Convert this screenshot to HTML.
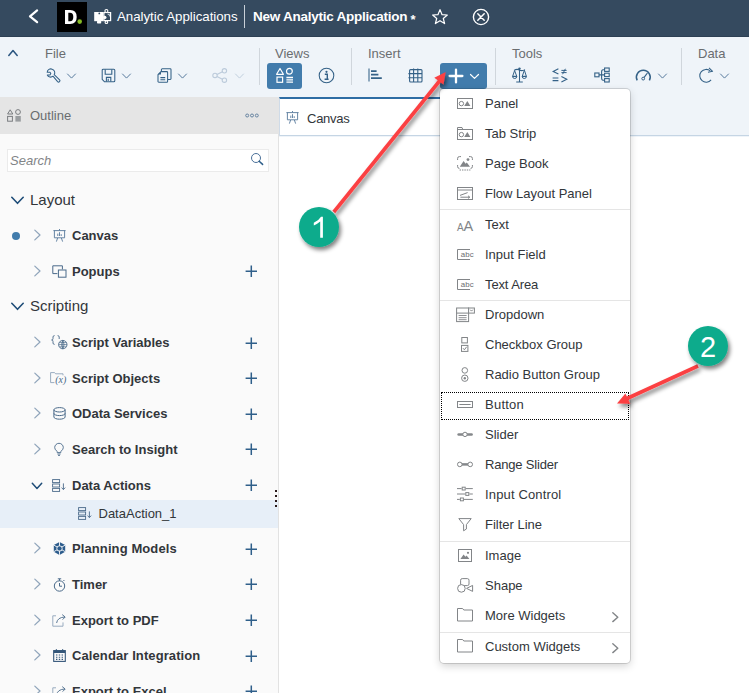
<!DOCTYPE html>
<html><head><meta charset="utf-8">
<style>
*{box-sizing:border-box;margin:0;padding:0}
html,body{width:749px;height:693px;overflow:hidden;background:#fff}
body{font-family:"Liberation Sans",sans-serif;position:relative;color:#32363a}
.abs{position:absolute}
#hdr{left:0;top:0;width:749px;height:37px;background:#354a5f;border-bottom:1px solid #2d4054}
#tb{left:0;top:37px;width:749px;height:100px;background:#eff4f9}
.tl{position:absolute;top:46px;font-size:13px;color:#6a6d70;line-height:15px}
.sep{position:absolute;top:48px;width:1px;height:37px;background:#d0d6dc}
.btn{position:absolute;top:63px;height:26px;background:#427cac;border-radius:3px}
svg{position:absolute;overflow:visible}
#left{left:0;top:97px;width:279px;height:596px;background:#fafafa;border-right:1px solid #e2e2e2}
#olh{left:0;top:97px;width:279px;height:37px;background:#e5e5e5}
#search{left:7px;top:149px;width:262px;height:23px;background:#fff;border:1px solid #ebebeb}
.grp{position:absolute;left:30px;font-size:15px;color:#32363a;line-height:18px}
.it{position:absolute;left:72px;margin-top:1px;font-size:13px;font-weight:bold;color:#32363a;line-height:16px;white-space:nowrap}
.plus{position:absolute;left:245px;width:12px;height:12px}
.plus:before{content:"";position:absolute;left:0;top:5.3px;width:12px;height:1.4px;background:#2f5f8a}
.plus:after{content:"";position:absolute;left:5.3px;top:0;width:1.4px;height:12px;background:#2f5f8a}
#tab{left:279px;top:97px;width:301px;height:39px;background:#fff;border-top:2px solid #2e6da4;border-left:1px solid #cfdbe8}
#tabline{left:280px;top:135px;width:469px;height:1px;background:#c5d5e4}
#menu{left:440px;top:89px;width:190px;height:573.5px;background:#fff;border-radius:4px;box-shadow:0 0 0 1px rgba(0,0,0,0.13),0 3px 9px rgba(0,0,0,0.18)}
.mi{position:absolute;left:485px;margin-top:1px;font-size:13px;color:#32363a;line-height:16px;white-space:nowrap}
.msep{position:absolute;left:440px;width:190px;height:1px;background:#e5e5e5}
.circ{position:absolute;width:41px;height:41px;border-radius:50%;background:#10a37f;border:2px solid #fff;box-shadow:0 2px 6px rgba(0,0,0,0.45);color:#fff;font-size:28px;text-align:center;line-height:38px}
</style></head><body>
<div class="abs" id="hdr"></div>
<!-- header content -->
<svg style="left:0px;top:0px" width="45" height="36" viewBox="0 0 45 36"><path d="M37.1 10.4 L30 16.3 L37.1 22.2" fill="none" stroke="#fff" stroke-width="2.2" stroke-linecap="round" stroke-linejoin="round"/></svg>
<div class="abs" style="left:57px;top:2px;width:30px;height:30px;background:#000"></div>
<svg style="left:57px;top:2px" width="30" height="30" viewBox="57 2 30 30"><path fill-rule="evenodd" d="M65 10 H70.2 Q76.7 10 76.7 17 Q76.7 24 70.2 24 H65 Z M68.3 12.8 V21.2 H70 Q73.3 21.2 73.3 17 Q73.3 12.8 70 12.8 Z" fill="#fff"/><circle cx="79.7" cy="21.6" r="2.3" fill="#86bc25"/></svg>
<svg style="left:94px;top:9px" width="18" height="15" viewBox="0 0 18 15"><rect x="0.2" y="3" width="9.4" height="9.2" fill="#fff"/><rect x="3" y="11.8" width="4.2" height="2.8" rx="0.8" fill="#fff"/><circle cx="5.3" cy="4.4" r="0.9" fill="#354a5f"/><rect x="10" y="3.6" width="6.6" height="8" fill="none" stroke="#fff" stroke-width="1.2"/><circle cx="12.4" cy="2" r="1.5" fill="#354a5f" stroke="#fff" stroke-width="1.1"/><circle cx="12.4" cy="13.2" r="1.3" fill="#354a5f" stroke="#fff" stroke-width="1.1"/><circle cx="10.8" cy="8.4" r="1.7" fill="#fff"/><path d="M13.6 5.4 L15.4 5.4 L15.4 7.4" fill="none" stroke="#dfe6ee" stroke-width="0.9"/><rect x="10.8" y="4.4" width="2.4" height="2" fill="#354a5f"/></svg>
<div class="abs" style="left:117px;top:9px;font-size:13.3px;color:#fff;line-height:16px;white-space:nowrap;letter-spacing:-0.03px">Analytic Applications</div>
<div class="abs" style="left:244px;top:5px;width:1px;height:23px;background:#c8d0d8"></div>
<div class="abs" style="left:253px;top:9px;font-size:13.5px;font-weight:bold;color:#fff;line-height:16px;white-space:nowrap;letter-spacing:-0.25px">New Analytic Application</div>
<div class="abs" style="left:410.5px;top:12px;font-size:13px;font-weight:bold;color:#fff;line-height:16px">*</div>
<svg style="left:431px;top:8px" width="18" height="17" viewBox="0 0 18 17"><g transform="translate(9,8.6) scale(0.94) translate(-9,-8.6)"><path d="M9 1.2 L11.2 6.6 L16.8 6.9 L12.5 10.6 L13.9 16 L9 13 L4.1 16 L5.5 10.6 L1.2 6.9 L6.8 6.6 Z" fill="none" stroke="#fff" stroke-width="1.3" stroke-linejoin="round"/></g></svg>
<svg style="left:472px;top:8px" width="18" height="18" viewBox="0 0 18 18"><circle cx="9" cy="9" r="7.6" fill="none" stroke="#fff" stroke-width="1.4"/><path d="M5.8 5.8 L12.2 12.2 M12.2 5.8 L5.8 12.2" stroke="#fff" stroke-width="1.5" stroke-linecap="round"/></svg>
<div class="abs" id="tb"></div>
<!-- toolbar content -->
<svg style="left:8px;top:49px" width="10" height="7" viewBox="0 0 10 7"><g transform="translate(0.0,0.5)"><path d="M0.8 6 L5 1 L9.2 6" fill="none" stroke="#2a5580" stroke-width="1.5" stroke-linecap="round" stroke-linejoin="round"/></g></svg>
<div class="tl" style="left:45px">File</div>
<div class="tl" style="left:275px">Views</div>
<div class="tl" style="left:368px">Insert</div>
<div class="tl" style="left:512px">Tools</div>
<div class="tl" style="left:698px">Data</div>
<div class="sep" style="left:259px"></div>
<div class="sep" style="left:351px"></div>
<div class="sep" style="left:495px"></div>
<div class="sep" style="left:681px"></div>
<div class="btn" style="left:267px;width:35px"></div>
<div class="btn" style="left:440px;width:47px"></div>
<svg style="left:46px;top:68px" width="15" height="15" viewBox="0 0 15 15"><path d="M6.2 1.2 A3.6 3.6 0 0 0 1.2 4.2 L4 4.2 L4.8 5.6 L4 7 L1.3 7 A3.6 3.6 0 0 0 7 8.2 L11.6 13.6 A1.3 1.3 0 0 0 13.6 11.8 L8.2 6.6 A3.6 3.6 0 0 0 6.2 1.2 Z" fill="none" stroke="#346187" stroke-width="1.05" stroke-linejoin="round"/></svg>
<svg style="left:67px;top:73px" width="9" height="5.6" viewBox="0 0 9 5.6"><g transform="translate(0.0,0.5)"><path d="M0.5 0.5 L4.5 4.6 L8.5 0.5" fill="none" stroke="#56799d" stroke-width="1" stroke-linecap="round" stroke-linejoin="round"/></g></svg>
<svg style="left:101px;top:68px" width="15" height="15" viewBox="0 0 15 15"><path d="M2.2 1.2 H12.8 A1 1 0 0 1 13.8 2.2 V12.8 A1 1 0 0 1 12.8 13.8 H3.6 L1.2 11.4 V2.2 A1 1 0 0 1 2.2 1.2 Z" fill="none" stroke="#346187" stroke-width="1.05" stroke-linejoin="round"/><path d="M4.2 1.4 V6.2 H10.8 V1.4" fill="none" stroke="#346187" stroke-width="1.1"/><path d="M5.4 13.6 V9.4 H9.8 V13.6 M7.2 10.8 V13" fill="none" stroke="#346187" stroke-width="1.1"/></svg>
<svg style="left:122px;top:73px" width="9" height="5.6" viewBox="0 0 9 5.6"><g transform="translate(0.0,0.5)"><path d="M0.5 0.5 L4.5 4.6 L8.5 0.5" fill="none" stroke="#56799d" stroke-width="1" stroke-linecap="round" stroke-linejoin="round"/></g></svg>
<svg style="left:157px;top:68px" width="15" height="15" viewBox="0 0 15 15"><path d="M4.4 3.2 V1.6 A0.8 0.8 0 0 1 5.2 0.8 H13.2 A0.8 0.8 0 0 1 14 1.6 V10.6 A0.8 0.8 0 0 1 13.2 11.4 H11" fill="none" stroke="#346187" stroke-width="1.05"/><path d="M4 3.6 H9.8 A0.8 0.8 0 0 1 10.6 4.4 V13.4 A0.8 0.8 0 0 1 9.8 14.2 H1.8 A0.8 0.8 0 0 1 1 13.4 V6.6 Z" fill="none" stroke="#346187" stroke-width="1.05" stroke-linejoin="round"/><path d="M1 6.6 H4 V3.6 Z" fill="#346187"/><path d="M3.4 9.6 H8.2 M3.4 11.8 H8.2" stroke="#346187" stroke-width="1.1"/></svg>
<svg style="left:178px;top:73px" width="9" height="5.6" viewBox="0 0 9 5.6"><g transform="translate(0.0,0.5)"><path d="M0.5 0.5 L4.5 4.6 L8.5 0.5" fill="none" stroke="#56799d" stroke-width="1" stroke-linecap="round" stroke-linejoin="round"/></g></svg>
<svg style="left:212px;top:68px" width="16" height="15" viewBox="0 0 16 15"><circle cx="3" cy="7.4" r="2.2" fill="none" stroke="#bccbdb" stroke-width="1.1"/><circle cx="12.4" cy="2.8" r="2.2" fill="none" stroke="#bccbdb" stroke-width="1.1"/><circle cx="12.4" cy="12.2" r="2.2" fill="none" stroke="#bccbdb" stroke-width="1.1"/><path d="M5 6.4 L10.4 3.8 M5 8.4 L10.4 11.2" stroke="#bccbdb" stroke-width="1.1"/></svg>
<svg style="left:235px;top:73px" width="9" height="5.6" viewBox="0 0 9 5.6"><g transform="translate(0.0,0.5)"><path d="M0.5 0.5 L4.5 4.6 L8.5 0.5" fill="none" stroke="#c0cfdd" stroke-width="1" stroke-linecap="round" stroke-linejoin="round"/></g></svg>
<svg style="left:276px;top:67px" width="18" height="16" viewBox="0 0 18 16"><g transform="translate(0.0,0.5)"><path d="M4 1 L7.4 6.8 H0.6 Z" fill="none" stroke="#fff" stroke-width="1.2" stroke-linejoin="round"/><circle cx="13.4" cy="3.8" r="2.9" fill="none" stroke="#fff" stroke-width="1.2"/><rect x="1" y="9.6" width="5.6" height="5.2" fill="none" stroke="#fff" stroke-width="1.2"/><path d="M10.4 10 H17 M10.4 12.4 H17 M10.4 14.6 H17" stroke="#fff" stroke-width="1.3"/></g></svg>
<svg style="left:318px;top:67px" width="17" height="17" viewBox="0 0 17 17"><circle cx="8.5" cy="8.5" r="7.3" fill="none" stroke="#346187" stroke-width="1.05"/><circle cx="8.5" cy="4.8" r="1.1" fill="#346187"/><path d="M6.8 7.2 H9.3 V12 M6.6 12.2 H10.6" fill="none" stroke="#346187" stroke-width="1.4"/></svg>
<svg style="left:368px;top:68px" width="15" height="14" viewBox="0 0 15 14"><path d="M1 0.6 V13.6" stroke="#346187" stroke-width="1.05"/><path d="M3 3.2 H8.6 M3 6.6 H10.4 M3 10.2 H13.8" stroke="#346187" stroke-width="1.7"/></svg>
<svg style="left:408px;top:68px" width="15" height="15" viewBox="0 0 15 15"><rect x="1.6" y="1.6" width="12.4" height="12.4" rx="1" fill="none" stroke="#346187" stroke-width="1.1"/><path d="M5.6 0.4 V14 M9.8 0.4 V14 M0.4 5.6 H14 M0.4 9.8 H14" stroke="#346187" stroke-width="1.1"/></svg>
<svg style="left:449px;top:69px" width="14" height="14" viewBox="0 0 14 14"><path d="M7 0.6 V13.4 M0.6 7 H13.4" stroke="#fff" stroke-width="2.3" stroke-linecap="round"/></svg>
<svg style="left:470px;top:74px" width="9" height="5.4" viewBox="0 0 9 5.4"><path d="M0.5 0.5 L4.5 4.4 L8.5 0.5" fill="none" stroke="#fff" stroke-width="1.2" stroke-linecap="round" stroke-linejoin="round"/></svg>
<svg style="left:512px;top:67px" width="15" height="16" viewBox="0 0 15 16"><path d="M7.5 1 V14.6 M4.2 15 H10.8 M2 3.4 Q5 1.6 7.5 3 Q10 4.4 13 2.6" fill="none" stroke="#346187" stroke-width="1.05"/><path d="M0.6 9.4 L2.6 3.6 L4.8 9.4 Z M0.6 9.4 A2.1 2.1 0 0 0 4.8 9.4 Z" fill="none" stroke="#346187" stroke-width="1"/><path d="M10.2 9.4 L12.4 3.2 L14.4 9.4 Z M10.2 9.4 A2.1 2.1 0 0 0 14.4 9.4 Z" fill="none" stroke="#346187" stroke-width="1"/><circle cx="7.5" cy="1.6" r="1.2" fill="#346187"/></svg>
<svg style="left:552px;top:68px" width="16" height="15" viewBox="0 0 16 15"><path d="M6.4 0.8 L1.2 3.4 L6.4 6" fill="none" stroke="#346187" stroke-width="1.1"/><path d="M9.4 2.4 H14.6 M9.4 4.6 H14.6 M13.4 0.8 L10.6 6.2" stroke="#346187" stroke-width="1"/><path d="M0.6 10 H6.4 M0.6 12.6 H6.4" stroke="#346187" stroke-width="1.1"/><path d="M9.4 8.4 L14.8 11.2 L9.4 14" fill="none" stroke="#346187" stroke-width="1.1"/></svg>
<svg style="left:594px;top:67px" width="16" height="16" viewBox="0 0 16 16"><rect x="0.8" y="6" width="4.2" height="3.8" fill="none" stroke="#346187" stroke-width="1.1"/><rect x="10.6" y="1" width="4.6" height="3.4" fill="none" stroke="#346187" stroke-width="1.1"/><rect x="10.6" y="6.2" width="4.6" height="3.4" fill="none" stroke="#346187" stroke-width="1.1"/><rect x="10.6" y="11.6" width="4.6" height="3.4" fill="none" stroke="#346187" stroke-width="1.1"/><path d="M5 7.9 H10.6 M10.6 2.7 H9 Q7.6 2.7 7.6 5 V10.8 Q7.6 13.3 9 13.3 H10.6" fill="none" stroke="#346187" stroke-width="1.1"/></svg>
<svg style="left:635px;top:69px" width="17" height="13" viewBox="0 0 17 13"><path d="M2.2 11.4 A6.9 6.9 0 1 1 14.4 11.4" fill="none" stroke="#346187" stroke-width="1.5"/><path d="M8.2 9.6 L12.4 4" stroke="#346187" stroke-width="1.2"/><circle cx="8.2" cy="9.6" r="1.4" fill="#eff4f9" stroke="#346187" stroke-width="1"/></svg>
<svg style="left:658px;top:73px" width="9" height="5.6" viewBox="0 0 9 5.6"><g transform="translate(0.0,0.5)"><path d="M0.5 0.5 L4.5 4.6 L8.5 0.5" fill="none" stroke="#56799d" stroke-width="1" stroke-linecap="round" stroke-linejoin="round"/></g></svg>
<svg style="left:699px;top:67px" width="16" height="17" viewBox="0 0 16 17"><path d="M12.1 12.9 A6.4 6.4 0 1 1 11.3 3.9" fill="none" stroke="#346187" stroke-width="1.05"/><path d="M10 0.9 L13.6 4.3 L9 5.3" fill="none" stroke="#346187" stroke-width="1.05" stroke-linejoin="round"/></svg>
<svg style="left:720px;top:73px" width="9" height="5.6" viewBox="0 0 9 5.6"><g transform="translate(0.0,0.5)"><path d="M0.5 0.5 L4.5 4.6 L8.5 0.5" fill="none" stroke="#56799d" stroke-width="1" stroke-linecap="round" stroke-linejoin="round"/></g></svg>
<div class="abs" id="left"></div>
<div class="abs" id="olh"></div>
<div class="abs" id="search"></div>
<!-- outline header -->
<svg style="left:7px;top:109px" width="15" height="13" viewBox="0 0 15 13"><path d="M3.2 0.8 L5.8 5 H0.6 Z" fill="none" stroke="#7a7d80" stroke-width="1"/><circle cx="11" cy="3" r="2.4" fill="none" stroke="#7a7d80" stroke-width="1"/><rect x="0.6" y="7.4" width="4.8" height="4.8" fill="none" stroke="#7a7d80" stroke-width="1"/><rect x="8.4" y="7" width="5.4" height="5.6" fill="#9a9da0"/></svg>
<div class="abs" style="left:30px;top:108px;font-size:13px;color:#6a6d70;line-height:16px">Outline</div>
<svg style="left:245px;top:113px" width="14" height="5" viewBox="0 0 14 5"><circle cx="2.2" cy="2.5" r="1.5" fill="none" stroke="#5b7a9a" stroke-width="0.9"/><circle cx="7" cy="2.5" r="1.5" fill="none" stroke="#5b7a9a" stroke-width="0.9"/><circle cx="11.8" cy="2.5" r="1.5" fill="none" stroke="#5b7a9a" stroke-width="0.9"/></svg>
<div class="abs" style="left:10px;top:153px;font-size:13px;font-style:italic;color:#828588;line-height:16px">Search</div>
<svg style="left:250px;top:152px" width="14" height="14" viewBox="0 0 14 14"><circle cx="6" cy="6" r="4.5" fill="none" stroke="#4a7099" stroke-width="1"/><path d="M9.2 9.2 L12.6 12.4" stroke="#2f5f8a" stroke-width="1.5" stroke-linecap="round"/></svg>
<!-- selected row -->
<div class="abs" style="left:0;top:500px;width:278px;height:27.5px;background:#e7eff8"></div>
<svg style="left:11px;top:196px" width="13" height="8" viewBox="0 0 13 8"><g transform="translate(0.0,0.5)"><path d="M0.8 0.8 L6.5 6.8 L12.2 0.8" fill="none" stroke="#1f4d78" stroke-width="1.6" stroke-linecap="round" stroke-linejoin="round"/></g></svg>
<div class="grp" style="top:190.5px">Layout</div>
<div class="abs" style="left:12px;top:232px;width:8px;height:8px;border-radius:50%;background:#427cac"></div>
<svg style="left:34px;top:229px" width="7" height="11" viewBox="0 0 7 11"><g transform="translate(0.0,0.5)"><path d="M0.8 0.6 L6 5.5 L0.8 10.4" fill="none" stroke="#8fa4ba" stroke-width="1.2" stroke-linecap="round" stroke-linejoin="round"/></g></svg>
<div class="it" style="top:227px">Canvas</div>
<svg style="left:34px;top:265px" width="7" height="11" viewBox="0 0 7 11"><g transform="translate(0.0,0.5)"><path d="M0.8 0.6 L6 5.5 L0.8 10.4" fill="none" stroke="#8fa4ba" stroke-width="1.2" stroke-linecap="round" stroke-linejoin="round"/></g></svg>
<div class="it" style="top:263px">Popups</div>
<svg style="left:245px;top:265px" width="13" height="13" viewBox="0 0 13 13"><path d="M6.3 0.6 V12 M0.6 6.3 H12" stroke="#2f5f8a" stroke-width="1.5" fill="none"/></svg>
<svg style="left:11px;top:302px" width="13" height="8" viewBox="0 0 13 8"><g transform="translate(0.0,0.5)"><path d="M0.8 0.8 L6.5 6.8 L12.2 0.8" fill="none" stroke="#1f4d78" stroke-width="1.6" stroke-linecap="round" stroke-linejoin="round"/></g></svg>
<div class="grp" style="top:296.5px">Scripting</div>
<svg style="left:34px;top:336px" width="7" height="11" viewBox="0 0 7 11"><g transform="translate(0.0,0.5)"><path d="M0.8 0.6 L6 5.5 L0.8 10.4" fill="none" stroke="#8fa4ba" stroke-width="1.2" stroke-linecap="round" stroke-linejoin="round"/></g></svg>
<div class="it" style="top:334px">Script Variables</div>
<svg style="left:245px;top:337px" width="13" height="13" viewBox="0 0 13 13"><path d="M6.3 0.6 V12 M0.6 6.3 H12" stroke="#2f5f8a" stroke-width="1.5" fill="none"/></svg>
<svg style="left:34px;top:372px" width="7" height="11" viewBox="0 0 7 11"><g transform="translate(0.0,0.5)"><path d="M0.8 0.6 L6 5.5 L0.8 10.4" fill="none" stroke="#8fa4ba" stroke-width="1.2" stroke-linecap="round" stroke-linejoin="round"/></g></svg>
<div class="it" style="top:370px">Script Objects</div>
<svg style="left:245px;top:372px" width="13" height="13" viewBox="0 0 13 13"><path d="M6.3 0.6 V12 M0.6 6.3 H12" stroke="#2f5f8a" stroke-width="1.5" fill="none"/></svg>
<svg style="left:34px;top:407px" width="7" height="11" viewBox="0 0 7 11"><g transform="translate(0.0,0.5)"><path d="M0.8 0.6 L6 5.5 L0.8 10.4" fill="none" stroke="#8fa4ba" stroke-width="1.2" stroke-linecap="round" stroke-linejoin="round"/></g></svg>
<div class="it" style="top:405px">OData Services</div>
<svg style="left:245px;top:408px" width="13" height="13" viewBox="0 0 13 13"><path d="M6.3 0.6 V12 M0.6 6.3 H12" stroke="#2f5f8a" stroke-width="1.5" fill="none"/></svg>
<svg style="left:34px;top:443px" width="7" height="11" viewBox="0 0 7 11"><g transform="translate(0.0,0.5)"><path d="M0.8 0.6 L6 5.5 L0.8 10.4" fill="none" stroke="#8fa4ba" stroke-width="1.2" stroke-linecap="round" stroke-linejoin="round"/></g></svg>
<div class="it" style="top:441px">Search to Insight</div>
<svg style="left:245px;top:443px" width="13" height="13" viewBox="0 0 13 13"><path d="M6.3 0.6 V12 M0.6 6.3 H12" stroke="#2f5f8a" stroke-width="1.5" fill="none"/></svg>
<svg style="left:31px;top:482px" width="11" height="7" viewBox="0 0 11 7"><g transform="translate(0.5,0.5)"><path d="M0.8 0.8 L5.5 5.9 L10.2 0.8" fill="none" stroke="#1f4d78" stroke-width="1.5" stroke-linecap="round" stroke-linejoin="round"/></g></svg>
<div class="it" style="top:477px">Data Actions</div>
<svg style="left:245px;top:479px" width="13" height="13" viewBox="0 0 13 13"><path d="M6.3 0.6 V12 M0.6 6.3 H12" stroke="#2f5f8a" stroke-width="1.5" fill="none"/></svg>
<div class="abs" style="left:98.5px;top:506px;font-size:13px;color:#32363a;line-height:16px">DataAction_1</div>
<svg style="left:34px;top:542px" width="7" height="11" viewBox="0 0 7 11"><g transform="translate(0.0,0.5)"><path d="M0.8 0.6 L6 5.5 L0.8 10.4" fill="none" stroke="#8fa4ba" stroke-width="1.2" stroke-linecap="round" stroke-linejoin="round"/></g></svg>
<div class="it" style="top:540px;letter-spacing:0.1px">Planning Models</div>
<svg style="left:245px;top:543px" width="13" height="13" viewBox="0 0 13 13"><path d="M6.3 0.6 V12 M0.6 6.3 H12" stroke="#2f5f8a" stroke-width="1.5" fill="none"/></svg>
<svg style="left:34px;top:578px" width="7" height="11" viewBox="0 0 7 11"><g transform="translate(0.0,0.5)"><path d="M0.8 0.6 L6 5.5 L0.8 10.4" fill="none" stroke="#8fa4ba" stroke-width="1.2" stroke-linecap="round" stroke-linejoin="round"/></g></svg>
<div class="it" style="top:576px">Timer</div>
<svg style="left:245px;top:578px" width="13" height="13" viewBox="0 0 13 13"><path d="M6.3 0.6 V12 M0.6 6.3 H12" stroke="#2f5f8a" stroke-width="1.5" fill="none"/></svg>
<svg style="left:34px;top:614px" width="7" height="11" viewBox="0 0 7 11"><g transform="translate(0.0,0.5)"><path d="M0.8 0.6 L6 5.5 L0.8 10.4" fill="none" stroke="#8fa4ba" stroke-width="1.2" stroke-linecap="round" stroke-linejoin="round"/></g></svg>
<div class="it" style="top:612px">Export to PDF</div>
<svg style="left:245px;top:614px" width="13" height="13" viewBox="0 0 13 13"><path d="M6.3 0.6 V12 M0.6 6.3 H12" stroke="#2f5f8a" stroke-width="1.5" fill="none"/></svg>
<svg style="left:34px;top:649px" width="7" height="11" viewBox="0 0 7 11"><g transform="translate(0.0,0.5)"><path d="M0.8 0.6 L6 5.5 L0.8 10.4" fill="none" stroke="#8fa4ba" stroke-width="1.2" stroke-linecap="round" stroke-linejoin="round"/></g></svg>
<div class="it" style="top:647px;letter-spacing:0.1px">Calendar Integration</div>
<svg style="left:245px;top:650px" width="13" height="13" viewBox="0 0 13 13"><path d="M6.3 0.6 V12 M0.6 6.3 H12" stroke="#2f5f8a" stroke-width="1.5" fill="none"/></svg>
<svg style="left:34px;top:685px" width="7" height="11" viewBox="0 0 7 11"><g transform="translate(0.0,0.5)"><path d="M0.8 0.6 L6 5.5 L0.8 10.4" fill="none" stroke="#8fa4ba" stroke-width="1.2" stroke-linecap="round" stroke-linejoin="round"/></g></svg>
<div class="it" style="top:683px">Export to Excel</div>
<svg style="left:245px;top:685px" width="13" height="13" viewBox="0 0 13 13"><path d="M6.3 0.6 V12 M0.6 6.3 H12" stroke="#2f5f8a" stroke-width="1.5" fill="none"/></svg>
<svg style="left:53px;top:229px" width="13" height="13" viewBox="0 0 13 13"><path d="M6.5 0 V1.4 M0.4 1.6 H12.6 M1.4 1.6 V8.8 H11.6 V1.6 M4.6 9 L3.4 12.6 M8.4 9 L9.6 12.6" fill="none" stroke="#56789b" stroke-width="0.9"/><path d="M4.8 4.6 V7 M6.5 3.2 V7 M8.2 5.2 V7" stroke="#56789b" stroke-width="0.9"/></svg>
<svg style="left:52px;top:265px" width="15" height="13" viewBox="0 0 15 13"><path d="M5.4 8.6 H0.8 V0.8 H10.4 V4.4" fill="none" stroke="#4a6a8a" stroke-width="1"/><rect x="6.4" y="5" width="7.6" height="7.2" fill="#fafafa" stroke="#4a6a8a" stroke-width="1"/></svg>
<svg style="left:51px;top:335px" width="17" height="15" viewBox="0 0 17 15"><path d="M3.6 0.6 Q2 0.6 2 2 V3.6 Q2 5 0.6 5 Q2 5 2 6.4 V8 Q2 9.4 3.6 9.4" fill="none" stroke="#4a6a8a" stroke-width="0.9"/><path d="M6.6 0.6 Q8.2 0.6 8.2 2 V4" fill="none" stroke="#4a6a8a" stroke-width="0.9"/><circle cx="11.8" cy="9.6" r="4.2" fill="none" stroke="#4a6a8a" stroke-width="0.9"/><path d="M7.6 9.6 H16 M11.8 5.4 V13.8 M8.4 7.4 H15.2 M8.4 11.8 H15.2 M11.8 5.4 Q9 9.6 11.8 13.8 M11.8 5.4 Q14.6 9.6 11.8 13.8" fill="none" stroke="#4a6a8a" stroke-width="0.7"/></svg>
<svg style="left:50px;top:372px" width="19" height="12" viewBox="0 0 19 12"><path d="M4.4 10.6 H0.6 V0.6 H4.6 L5.6 1.8 H13 V3.4" fill="none" stroke="#8fa4ba" stroke-width="0.9"/><text x="5.2" y="10.6" font-family="Liberation Serif" font-style="italic" font-size="10" fill="#4a6a8a">(x)</text></svg>
<svg style="left:53px;top:407px" width="13" height="13" viewBox="0 0 13 13"><ellipse cx="6.5" cy="2.8" rx="5.6" ry="2.2" fill="none" stroke="#4a6a8a" stroke-width="1"/><path d="M0.9 2.8 V10 A5.6 2.2 0 0 0 12.1 10 V2.8 M0.9 6.4 A5.6 2.2 0 0 0 12.1 6.4" fill="none" stroke="#4a6a8a" stroke-width="1"/></svg>
<svg style="left:54px;top:443px" width="10" height="13" viewBox="0 0 10 13"><path d="M3.2 9.6 V8.4 Q0.7 6.8 0.7 4.6 A4.3 4.3 0 0 1 9.3 4.6 Q9.3 6.8 6.8 8.4 V9.6 Z" fill="none" stroke="#4a6a8a" stroke-width="0.9"/><path d="M3.4 11 H6.6 M4 12.4 H6" stroke="#4a6a8a" stroke-width="0.9"/></svg>
<svg style="left:52px;top:479px" width="14" height="13" viewBox="0 0 14 13"><rect x="0.6" y="0.6" width="7" height="3" fill="none" stroke="#4a6a8a" stroke-width="0.9"/><rect x="0.6" y="5" width="7" height="3" fill="none" stroke="#4a6a8a" stroke-width="0.9"/><rect x="0.6" y="9.4" width="7" height="3" fill="none" stroke="#4a6a8a" stroke-width="0.9"/><path d="M11.4 4.4 V10.4 M9.6 8.6 L11.4 10.6 L13.2 8.6" fill="none" stroke="#4a6a8a" stroke-width="0.9"/></svg>
<svg style="left:78px;top:507px" width="14" height="13" viewBox="0 0 14 13"><rect x="0.6" y="0.6" width="7" height="3" fill="none" stroke="#4a6a8a" stroke-width="0.9"/><rect x="0.6" y="5" width="7" height="3" fill="none" stroke="#4a6a8a" stroke-width="0.9"/><rect x="0.6" y="9.4" width="7" height="3" fill="none" stroke="#4a6a8a" stroke-width="0.9"/><path d="M11.4 4.4 V10.4 M9.6 8.6 L11.4 10.6 L13.2 8.6" fill="none" stroke="#4a6a8a" stroke-width="0.9"/></svg>
<svg style="left:53px;top:541px" width="13" height="14" viewBox="0 0 13 14"><g transform="translate(0.0,0.5)"><path d="M6.5 0.4 L12.2 3.6 V10.2 L6.5 13.4 L0.8 10.2 V3.6 Z" fill="#2d5c8c"/><path d="M6.5 0.4 V13.4 M0.8 3.6 L12.2 10.2 M12.2 3.6 L0.8 10.2" stroke="#fafafa" stroke-width="0.9"/><circle cx="6.5" cy="6.9" r="3" fill="#fafafa"/><circle cx="6.5" cy="6.9" r="2.2" fill="#2d5c8c"/></g></svg>
<svg style="left:53px;top:578px" width="13" height="14" viewBox="0 0 13 14"><circle cx="6.5" cy="8" r="5.2" fill="none" stroke="#4a6a8a" stroke-width="1"/><path d="M4.8 0.8 H8.2 M6.5 0.8 V2.8 M10.4 3 L11.4 2 M6.5 5 V8.2 H9" fill="none" stroke="#4a6a8a" stroke-width="1"/></svg>
<svg style="left:52px;top:614px" width="15" height="13" viewBox="0 0 15 13"><path d="M4 1.8 H0.8 V12.2 H11 V8.4" fill="none" stroke="#8fa4ba" stroke-width="0.9"/><path d="M4.6 9 Q5.4 3.4 12.8 3 M10.2 0.6 L13.2 3 L10.6 5.6" fill="none" stroke="#4a6a8a" stroke-width="0.9"/></svg>
<svg style="left:52px;top:686px" width="15" height="13" viewBox="0 0 15 13"><path d="M4 1.8 H0.8 V12.2 H11 V8.4" fill="none" stroke="#8fa4ba" stroke-width="0.9"/><path d="M4.6 9 Q5.4 3.4 12.8 3 M10.2 0.6 L13.2 3 L10.6 5.6" fill="none" stroke="#4a6a8a" stroke-width="0.9"/></svg>
<svg style="left:53px;top:649px" width="13" height="13" viewBox="0 0 13 13"><rect x="0.7" y="1.6" width="11.6" height="10.8" fill="none" stroke="#35577a" stroke-width="1.1"/><rect x="0.7" y="1.6" width="11.6" height="2.4" fill="#35577a"/><path d="M3.4 0.2 V2 M9.6 0.2 V2" stroke="#35577a" stroke-width="1.2"/><path d="M3 6 H4.4 M5.8 6 H7.2 M8.6 6 H10 M3 8.2 H4.4 M5.8 8.2 H7.2 M8.6 8.2 H10 M3 10.4 H4.4 M5.8 10.4 H7.2 M8.6 10.4 H10" stroke="#35577a" stroke-width="1.1"/></svg>
<div class="abs" style="left:275px;top:489.5px;width:2px;height:2.5px;background:#2a1a1a"></div><div class="abs" style="left:275px;top:494.5px;width:2px;height:2.5px;background:#2a1a1a"></div><div class="abs" style="left:275px;top:499.5px;width:2px;height:2.5px;background:#2a1a1a"></div><div class="abs" style="left:275px;top:504.5px;width:2px;height:2.5px;background:#2a1a1a"></div>
<div class="abs" id="tab"></div>
<div class="abs" id="tabline"></div>
<!-- canvas tab content -->
<svg style="left:286px;top:111px" width="13" height="13" viewBox="0 0 13 13"><path d="M6.5 0 V1.4 M0.4 1.6 H12.6 M1.4 1.6 V8.8 H11.6 V1.6 M4.6 9 L3.4 12.6 M8.4 9 L9.6 12.6" fill="none" stroke="#56789b" stroke-width="0.9"/><path d="M4.8 4.6 V7 M6.5 3.2 V7 M8.2 5.2 V7" stroke="#56789b" stroke-width="0.9"/></svg>
<div class="abs" style="left:307px;top:111px;font-size:13px;letter-spacing:-0.25px;color:#32363a;line-height:16px">Canvas</div>
<div class="abs" id="menu"></div>
<div class="mi" style="top:95px">Panel</div>
<div class="mi" style="top:125px">Tab Strip</div>
<div class="mi" style="top:155px">Page Book</div>
<div class="mi" style="top:185px">Flow Layout Panel</div>
<div class="mi" style="top:216px">Text</div>
<div class="mi" style="top:246px">Input Field</div>
<div class="mi" style="top:276px;letter-spacing:-0.12px">Text Area</div>
<div class="mi" style="top:306px">Dropdown</div>
<div class="mi" style="top:336px">Checkbox Group</div>
<div class="mi" style="top:366px">Radio Button Group</div>
<div class="mi" style="top:396px;letter-spacing:0.25px">Button</div>
<div class="mi" style="top:426px">Slider</div>
<div class="mi" style="top:456px;letter-spacing:-0.18px">Range Slider</div>
<div class="mi" style="top:486px;letter-spacing:0.15px">Input Control</div>
<div class="mi" style="top:516px">Filter Line</div>
<div class="mi" style="top:547px">Image</div>
<div class="mi" style="top:577px">Shape</div>
<div class="mi" style="top:607px">More Widgets</div>
<div class="mi" style="top:638px">Custom Widgets</div>
<div class="msep" style="top:209px"></div>
<div class="msep" style="top:300px"></div>
<div class="msep" style="top:541px"></div>
<div class="msep" style="top:632px"></div>
<div class="abs" style="left:441px;top:392px;width:188px;height:28px;border:1px dotted #000"></div>
<svg style="left:457px;top:98px" width="16" height="11" viewBox="0 0 16 11"><rect x="0.5" y="0.5" width="15" height="10" fill="none" stroke="#828588" stroke-width="1"/><circle cx="4.4" cy="5.6" r="2.2" fill="none" stroke="#828588" stroke-width="1"/><path d="M7.2 8 L10.3 3 L13.4 8 Z" fill="#828588"/></svg>
<svg style="left:457px;top:127px" width="16" height="13" viewBox="0 0 16 13"><path d="M0.5 2.5 V0.5 H5 L5.8 2.5" fill="none" stroke="#828588" stroke-width="1"/><g transform="translate(0,2)"><rect x="0.5" y="0.5" width="15" height="10" fill="none" stroke="#828588" stroke-width="1"/><circle cx="4.4" cy="5.6" r="2.2" fill="none" stroke="#828588" stroke-width="1"/><path d="M7.2 8 L10.3 3 L13.4 8 Z" fill="#828588"/></g></svg>
<svg style="left:457px;top:156px" width="16" height="15" viewBox="0 0 16 15"><path d="M0.6 4 V2.4 Q0.6 0.6 2.4 0.6 H4 M12 0.6 H13.6 Q15.4 0.6 15.4 2.4 V4 M0.6 9 V10.6 Q0.6 12.4 2.4 12.4 M15.4 9 V10.6 Q15.4 12.4 13.6 12.4" fill="none" stroke="#828588" stroke-width="1"/><path d="M2.8 10.8 L6.6 5 L8.6 7.8 L9.8 6.4 L13 10.8 Z" fill="#828588"/><circle cx="11" cy="3.6" r="1.4" fill="#828588"/><path d="M2.6 14 H13.4" stroke="#828588" stroke-width="1" stroke-dasharray="1.4 1"/></svg>
<svg style="left:457px;top:187px" width="16" height="13" viewBox="0 0 16 13"><rect x="0.5" y="0.5" width="15" height="12" fill="none" stroke="#828588" stroke-width="1"/><path d="M0.5 3 H15.5" stroke="#828588" stroke-width="1"/><path d="M3 8.4 L10.6 5.6 M3.4 10.2 H12.6 M11 8.8 L12.8 10.2 L11 11.4" fill="none" stroke="#828588" stroke-width="1" stroke-width="0.8"/></svg>
<div class="abs" style="left:457px;top:219px;color:#828588;line-height:14px;white-space:nowrap;letter-spacing:-0.3px"><span style="font-size:10px">A</span><span style="font-size:14.5px">A</span></div>
<svg style="left:457px;top:249px" width="18" height="11" viewBox="0 0 18 11"><path d="M13 0.5 H0.5 V10.5 H13" fill="none" stroke="#828588" stroke-width="1"/><text x="3.8" y="8.3" font-family="Liberation Sans" font-size="7.8" fill="#6a6d70" letter-spacing="0.1">abc</text></svg>
<svg style="left:457px;top:279px" width="18" height="11" viewBox="0 0 18 11"><path d="M13 0.5 H0.5 V10.5 H13" fill="none" stroke="#828588" stroke-width="1"/><text x="3.8" y="8.3" font-family="Liberation Sans" font-size="7.8" fill="#6a6d70" letter-spacing="0.1">abc</text></svg>
<svg style="left:456px;top:307px" width="19" height="15" viewBox="0 0 19 15"><g transform="translate(0.0,0.5)"><rect x="0.6" y="0.5" width="12" height="13.6" fill="none" stroke="#828588" stroke-width="1"/><path d="M0.6 5.6 H12.6" stroke="#828588" stroke-width="1"/><rect x="12.6" y="0.5" width="5.8" height="5.1" fill="#fff" stroke="#828588" stroke-width="1"/><path d="M14.2 2.2 L15.5 3.6 L16.8 2.2" fill="none" stroke="#828588" stroke-width="1" stroke-width="0.8"/><path d="M2.6 8 H10.6 M2.6 10.2 H10.6 M2.6 12.2 H10.6" stroke="#828588" stroke-width="0.9"/></g></svg>
<svg style="left:461px;top:337px" width="8" height="15" viewBox="0 0 8 15"><rect x="0.8" y="0.5" width="5.6" height="5.4" fill="none" stroke="#828588" stroke-width="1"/><rect x="0.5" y="8.4" width="6.4" height="6" fill="none" stroke="#828588" stroke-width="1"/><path d="M2 11.2 L3.4 12.8 L5.6 9.8" fill="none" stroke="#828588" stroke-width="1" stroke-width="0.9"/></svg>
<svg style="left:461px;top:367px" width="8" height="15" viewBox="0 0 8 15"><circle cx="3.8" cy="3.4" r="2.8" fill="none" stroke="#828588" stroke-width="1"/><circle cx="3.8" cy="11.2" r="3.2" fill="none" stroke="#828588" stroke-width="1"/><circle cx="3.8" cy="11.2" r="1.2" fill="#828588"/></svg>
<svg style="left:457px;top:401px" width="16" height="7" viewBox="0 0 16 7"><rect x="0.5" y="0.5" width="15" height="6" fill="none" stroke="#828588" stroke-width="1"/><path d="M2.4 3.5 H13.6" stroke="#828588" stroke-width="1"/></svg>
<svg style="left:457px;top:431px" width="16" height="6" viewBox="0 0 16 6"><g transform="translate(0.0,0.4)"><path d="M1.6 3 H14.6" stroke="#85888b" stroke-width="2.5" stroke-linecap="round"/><circle cx="8" cy="3" r="2.2" fill="#fff" stroke="#828588" stroke-width="1"/></g></svg>
<svg style="left:457px;top:461px" width="16" height="6" viewBox="0 0 16 6"><g transform="translate(0.0,0.4)"><path d="M4 3 H12" stroke="#85888b" stroke-width="2.5"/><circle cx="2.8" cy="3" r="2.3" fill="#fff" stroke="#828588" stroke-width="1"/><circle cx="13.2" cy="3" r="2.3" fill="#fff" stroke="#828588" stroke-width="1"/></g></svg>
<svg style="left:456px;top:486px" width="18" height="16" viewBox="0 0 18 16"><path d="M1 2.6 H5.6 M9.8 2.6 H16.8 M1 8 H9.2 M13.4 8 H16.8 M1 13.4 H3.8 M8 13.4 H16.8" stroke="#828588" stroke-width="1"/><rect x="6.2" y="1.2" width="3" height="2.8" fill="none" stroke="#828588" stroke-width="1" stroke-width="0.9"/><rect x="9.8" y="6.6" width="3" height="2.8" fill="none" stroke="#828588" stroke-width="1" stroke-width="0.9"/><rect x="4.4" y="12" width="3" height="2.8" fill="none" stroke="#828588" stroke-width="1" stroke-width="0.9"/></svg>
<svg style="left:458px;top:518px" width="14" height="14" viewBox="0 0 14 14"><path d="M0.8 0.6 H13.2 L8.4 6.6 V11 L5.6 12.8 V6.6 Z" fill="none" stroke="#828588" stroke-width="1" stroke-linejoin="round"/></svg>
<svg style="left:458px;top:549px" width="14" height="13" viewBox="0 0 14 13"><rect x="0.5" y="0.5" width="13" height="12" fill="none" stroke="#828588" stroke-width="1"/><path d="M2.4 10 L5.6 5.6 L7.4 7.8 L8.6 6.6 L11.4 10 Z" fill="#828588"/><circle cx="10" cy="3.8" r="1.1" fill="#828588"/></svg>
<svg style="left:457px;top:578px" width="17" height="15" viewBox="0 0 17 15"><rect x="3.6" y="0.6" width="8.4" height="7" rx="1.6" fill="#fff" fill="none" stroke="#828588" stroke-width="1"/><path d="M15.6 7.4 V13.4 L9.6 10.4 Z" fill="#fff" fill="none" stroke="#828588" stroke-width="1" stroke-linejoin="round"/><circle cx="4.4" cy="10.4" r="3.8" fill="#fff" fill="none" stroke="#828588" stroke-width="1"/></svg>
<svg style="left:457px;top:608px" width="16" height="14" viewBox="0 0 16 14"><path d="M0.5 13 V0.5 H5.6 L6.8 2 H15.5 V13 Z" fill="none" stroke="#828588" stroke-width="1" stroke-linejoin="round"/></svg>
<svg style="left:457px;top:639px" width="16" height="14" viewBox="0 0 16 14"><path d="M0.5 13 V0.5 H5.6 L6.8 2 H15.5 V13 Z" fill="none" stroke="#828588" stroke-width="1" stroke-linejoin="round"/></svg>
<svg style="left:612px;top:612px" width="7" height="11" viewBox="0 0 7 11"><path d="M0.8 0.8 L5.8 5.2 L0.8 9.6" fill="none" stroke="#828588" stroke-width="1.4" stroke-linecap="round" stroke-linejoin="round"/></svg>
<svg style="left:612px;top:643px" width="7" height="11" viewBox="0 0 7 11"><path d="M0.8 0.8 L5.8 5.2 L0.8 9.6" fill="none" stroke="#828588" stroke-width="1.4" stroke-linecap="round" stroke-linejoin="round"/></svg>
<!-- annotations -->
<svg style="left:0;top:0" width="749" height="693" viewBox="0 0 749 693">
<defs><filter id="sh" x="-20%" y="-20%" width="150%" height="150%"><feGaussianBlur in="SourceAlpha" stdDeviation="2.1"/><feOffset dx="2.2" dy="2.8"/><feComponentTransfer><feFuncA type="linear" slope="0.5"/></feComponentTransfer><feMerge><feMergeNode/><feMergeNode in="SourceGraphic"/></feMerge></filter></defs>
<g filter="url(#sh)">
<path d="M333.8 212 L440.3 80" stroke="#fb4143" stroke-width="3.6" stroke-linecap="butt" fill="none"/>
<path d="M445.7 72 L434.3 77.7 L443.5 84.6 Z" fill="#fb4143"/>
<path d="M698 366 L627 398.5" stroke="#fb4143" stroke-width="3.6" fill="none"/>
<path d="M617 403.5 L625.4 393.6 L630.2 403.8 Z" fill="#fb4143"/>
</g>
<g filter="url(#sh)">
<circle cx="319" cy="227" r="20" fill="#0dab8c"/>
<circle cx="708" cy="346" r="20" fill="#0dab8c"/>
</g>
<path d="M322.9 237.8 H320.2 V221.6 Q317.6 224 313.8 225.4 V222.8 Q318.8 220.6 321 216.8 H322.9 Z" fill="#fff"/>
<text x="708" y="357" text-anchor="middle" font-family="Liberation Sans" font-size="29" fill="#fff">2</text>
</svg>
</body></html>
